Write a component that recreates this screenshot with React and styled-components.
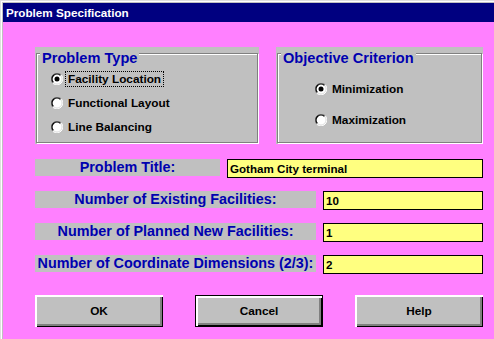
import React from "react";
import styled, { createGlobalStyle } from "styled-components";

const Global = createGlobalStyle`
  html, body { margin: 0; padding: 0; background: #ff80ff; overflow: hidden; }
  * { box-sizing: border-box; }
`;

const FONT = `"Liberation Sans", Arial, sans-serif`;

const Window = styled.div`
  width: 494px;
  height: 339px;
  display: flex;
  flex-direction: column;
  padding: 3px 0 0 3px;
  background: #c0c0c0;
  box-shadow: inset 1px 1px 0 #dfdfdf, inset 2px 2px 0 #ffffff;
  font-family: ${FONT};
`;

const TitleBar = styled.div`
  height: 19px;
  background: #000080;
  color: #ffffff;
  font-weight: bold;
  font-size: 11.7px;
  display: flex;
  align-items: center;
  padding-left: 3px;
`;

const Content = styled.div`
  flex: 1;
  background: #ff80ff;
  display: flex;
  flex-direction: column;
  padding: 25px 11px 0 32px;
`;

const PanelsRow = styled.div`
  display: flex;
  gap: 17px;
  height: 97px;
`;

const Panel = styled.div`
  width: ${(p) => p.$width};
  flex: ${(p) => (p.$grow ? 1 : "none")};
  background: #c0c0c0;
  padding: 6px 1px 1px 1px;
  display: flex;
`;

const Frame = styled.div`
  position: relative;
  flex: 1;
  border: 1px solid #808080;
  box-shadow: 1px 1px 0 #ffffff, inset 1px 1px 0 #ffffff;
  padding: ${(p) => p.$pad};
`;

const Legend = styled.div`
  position: absolute;
  top: -4px;
  left: 3px;
  padding: 0 2px;
  background: #c0c0c0;
  color: #0000b0;
  font-weight: bold;
  font-size: 14.6px;
  line-height: 16px;
  white-space: nowrap;
`;

const RadioList = styled.div`
  display: flex;
  flex-direction: column;
`;

const RadioRow = styled.div`
  display: flex;
  align-items: center;
  height: ${(p) => p.$h}px;
  gap: 2px;
`;

const RadioLabel = styled.span`
  font-size: 11.8px;
  font-weight: bold;
  color: #000;
  padding: 1px 2px;
  line-height: 12px;
  border: 1px dotted ${(p) => (p.$focus ? "#000" : "transparent")};
  white-space: nowrap;
`;

const Radio = ({ checked }) => (
  <svg width="12" height="12" viewBox="0 0 12 12">
    <circle cx="6" cy="6" r="5.5" fill="#fff" />
    <path d="M1.76 10.24 A6 6 0 0 1 10.24 1.76" fill="none" stroke="#808080" strokeWidth="1" />
    <path d="M2.46 9.54 A5 5 0 0 1 9.54 2.46" fill="none" stroke="#000" strokeWidth="1.2" />
    <path d="M10.24 1.76 A6 6 0 0 1 1.76 10.24" fill="none" stroke="#fff" strokeWidth="1" />
    <path d="M9.54 2.46 A5 5 0 0 1 2.46 9.54" fill="none" stroke="#dfdfdf" strokeWidth="1" />
    {checked && <circle cx="6" cy="6" r="2.5" fill="#000" />}
  </svg>
);

const FieldsColumn = styled.div`
  display: flex;
  flex-direction: column;
  gap: 13px;
  margin-top: 15px;
`;

const FieldRow = styled.div`
  display: flex;
  gap: 7px;
  align-items: flex-start;
  height: 19px;
`;

const FieldLabel = styled.div`
  width: ${(p) => p.$width}px;
  height: 17px;
  background: #c0c0c0;
  color: #0000b0;
  font-weight: bold;
  font-size: 14.4px;
  line-height: 17px;
  text-align: center;
  white-space: nowrap;
`;

const FieldInput = styled.input`
  flex: 1;
  min-width: 0;
  height: 19px;
  margin: 0;
  background: #ffff80;
  border: 1px solid #000;
  padding: 0 0 0 2px;
  font-family: ${FONT};
  font-weight: bold;
  font-size: 11.6px;
  color: #000;
  outline: none;
`;

const ButtonRow = styled.div`
  display: flex;
  justify-content: space-between;
  margin-top: 21px;
`;

const Button = styled.button`
  width: 128px;
  height: 32px;
  margin: 0;
  padding: 0;
  background: #c0c0c0;
  border: 1px solid ${(p) => (p.$default ? "#000" : "transparent")};
  border-width: ${(p) => (p.$default ? "1px" : "0")};
  box-shadow: inset 2px 2px 0 #ffffff, inset -1px -1px 0 #000000,
    inset -3px -3px 0 #808080;
  font-family: ${FONT};
  font-weight: bold;
  font-size: 11.8px;
  color: #000;
`;

export default function App() {
  return (
    <>
      <Global />
      <Window>
        <TitleBar>Problem Specification</TitleBar>
        <Content>
          <PanelsRow>
            <Panel $width="224px">
              <Frame $pad="13px 0 0 14px">
                <Legend>Problem Type</Legend>
                <RadioList>
                  <RadioRow $h={24}>
                    <Radio checked />
                    <RadioLabel $focus>Facility Location</RadioLabel>
                  </RadioRow>
                  <RadioRow $h={24}>
                    <Radio />
                    <RadioLabel>Functional Layout</RadioLabel>
                  </RadioRow>
                  <RadioRow $h={24}>
                    <Radio />
                    <RadioLabel>Line Balancing</RadioLabel>
                  </RadioRow>
                </RadioList>
              </Frame>
            </Panel>
            <Panel $grow>
              <Frame $pad="19px 0 0 37px">
                <Legend>Objective Criterion</Legend>
                <RadioList>
                  <RadioRow $h={31}>
                    <Radio checked />
                    <RadioLabel>Minimization</RadioLabel>
                  </RadioRow>
                  <RadioRow $h={31}>
                    <Radio />
                    <RadioLabel>Maximization</RadioLabel>
                  </RadioRow>
                </RadioList>
              </Frame>
            </Panel>
          </PanelsRow>
          <FieldsColumn>
            <FieldRow>
              <FieldLabel $width={185}>Problem Title:</FieldLabel>
              <FieldInput defaultValue="Gotham City terminal" />
            </FieldRow>
            <FieldRow>
              <FieldLabel $width={281}>Number of Existing Facilities:</FieldLabel>
              <FieldInput defaultValue="10" />
            </FieldRow>
            <FieldRow>
              <FieldLabel $width={281}>Number of Planned New Facilities:</FieldLabel>
              <FieldInput defaultValue="1" />
            </FieldRow>
            <FieldRow>
              <FieldLabel $width={281}>Number of Coordinate Dimensions (2/3):</FieldLabel>
              <FieldInput defaultValue="2" />
            </FieldRow>
          </FieldsColumn>
          <ButtonRow>
            <Button>OK</Button>
            <Button $default>Cancel</Button>
            <Button>Help</Button>
          </ButtonRow>
        </Content>
      </Window>
    </>
  );
}
